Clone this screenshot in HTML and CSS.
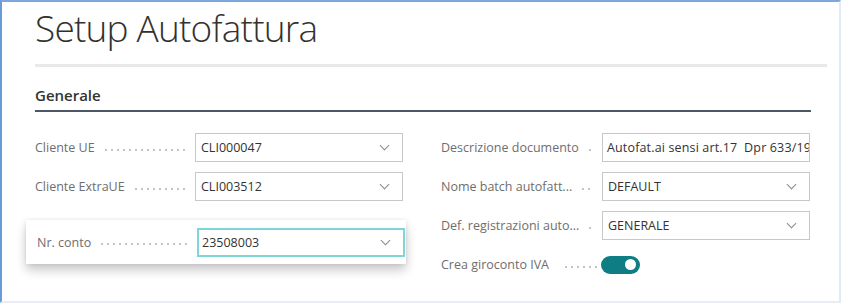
FILE: index.html
```html
<html>

<head>
  <meta charset="utf8">
  <title>Setup Autofattura</title>
  <link rel="stylesheet" href="styles.css">
</head>

<body>
  <section class="frame">
    <h1 class="title">Setup Autofattura</h1>
    <div class="rule"></div>
    <div class="group">
      <h2>Generale</h2>
    </div>
    <div class="columns">
      <div class="col">
        <div class="field">
          <span class="label">Cliente UE</span>
          <span class="leader"></span>
          <div class="input">CLI000047<span class="chev"></span></div>
        </div>
        <div class="field">
          <span class="label">Cliente ExtraUE</span>
          <span class="leader"></span>
          <div class="input">CLI003512<span class="chev"></span></div>
        </div>
        <div class="field card">
          <span class="label">Nr. conto</span>
          <span class="leader"></span>
          <div class="input focus">23508003<span class="chev"></span></div>
        </div>
      </div>
      <div class="col">
        <div class="field">
          <span class="label">Descrizione documento</span>
          <span class="leader"></span>
          <div class="input text">Autofat.ai sensi art.17&nbsp; Dpr 633/1972</div>
        </div>
        <div class="field">
          <span class="label">Nome batch autofatt...</span>
          <span class="leader"></span>
          <div class="input">DEFAULT<span class="chev"></span></div>
        </div>
        <div class="field">
          <span class="label">Def. registrazioni auto...</span>
          <span class="leader"></span>
          <div class="input">GENERALE<span class="chev"></span></div>
        </div>
        <div class="field">
          <span class="label">Crea giroconto IVA</span>
          <span class="leader short"></span>
          <span class="toggle"><span class="knob"></span></span>
        </div>
      </div>
    </div>
  </section>
</body>

</html>
```

FILE: styles.css
```css
* {
  margin: 0;
  padding: 0;
  box-sizing: border-box;
}

body {
  font-family: "Open Sans", "Noto Sans", sans-serif;
  font-size: 13px;
  color: #333;
  background: #fff;
}

.frame {
  width: 841px;
  height: 303px;
  border-left: 2px solid #6b9bd6;
  border-top: 2px solid #7ca6dc;
  border-right: 2px solid #e3eaf4;
  border-bottom: 2px solid #e8edf5;
  padding-left: 33px;
  overflow: hidden;
}

.title {
  font-size: 37px;
  font-weight: 300;
  color: #323130;
  line-height: 48px;
  margin-top: 2px;
  letter-spacing: -0.8px;
}

.rule {
  width: 792px;
  height: 3px;
  background: #e8e9eb;
  margin-top: 12px;
}

.group {
  width: 776px;
  border-bottom: 2px solid #4d5766;
  margin-top: 18px;
  padding-bottom: 5px;
}

.group h2 {
  font-size: 15px;
  font-weight: 600;
  color: #333;
  line-height: 20px;
}

.columns {
  display: grid;
  grid-template-columns: 368px 369px;
  column-gap: 38px;
  margin-top: 21px;
}

.field {
  display: flex;
  align-items: center;
  height: 29px;
  margin-bottom: 10px;
}

.label {
  color: #6e6e6e;
  font-size: 12.5px;
  white-space: nowrap;
}

.leader {
  flex: 1;
  height: 4px;
  margin: 4px 8px 0 8px;
  background: radial-gradient(circle, #c4c4c4 0.8px, transparent 1px) left center / 6px 4px repeat-x;
}

.input {
  flex: 0 0 208px;
  height: 29px;
  border: 1px solid #c8c8c8;
  display: flex;
  align-items: center;
  padding-left: 5px;
  color: #333;
  font-size: 12.5px;
  white-space: nowrap;
  overflow: hidden;
}

.input.text {
  padding-left: 4px;
  letter-spacing: 0.15px;
}

.chev {
  margin-left: auto;
  margin-right: 14px;
  width: 7px;
  height: 7px;
  border-right: 1px solid #8a8a8a;
  border-bottom: 1px solid #8a8a8a;
  transform: rotate(45deg);
  margin-top: -4px;
}

.card {
  height: 44px;
  margin-top: 19px;
  margin-left: -9px;
  margin-right: -3px;
  padding: 0 1px 0 11px;
  background: #fff;
  box-shadow: 0 6px 10px rgba(0, 0, 0, 0.22), 0 0 4px rgba(0, 0, 0, 0.08);
}

.input.focus {
  border: 2px solid #7dd6d9;
  padding-left: 3px;
}

.leader.short {
  flex: 0 0 36px;
  margin-left: 14px;
  margin-right: 2px;
}

.toggle {
  width: 39px;
  height: 18px;
  border-radius: 9px;
  background: #0e7e84;
  display: flex;
  align-items: center;
  justify-content: flex-end;
  padding-right: 4px;
}

.knob {
  width: 11px;
  height: 11px;
  border-radius: 50%;
  background: #fff;
}
```
